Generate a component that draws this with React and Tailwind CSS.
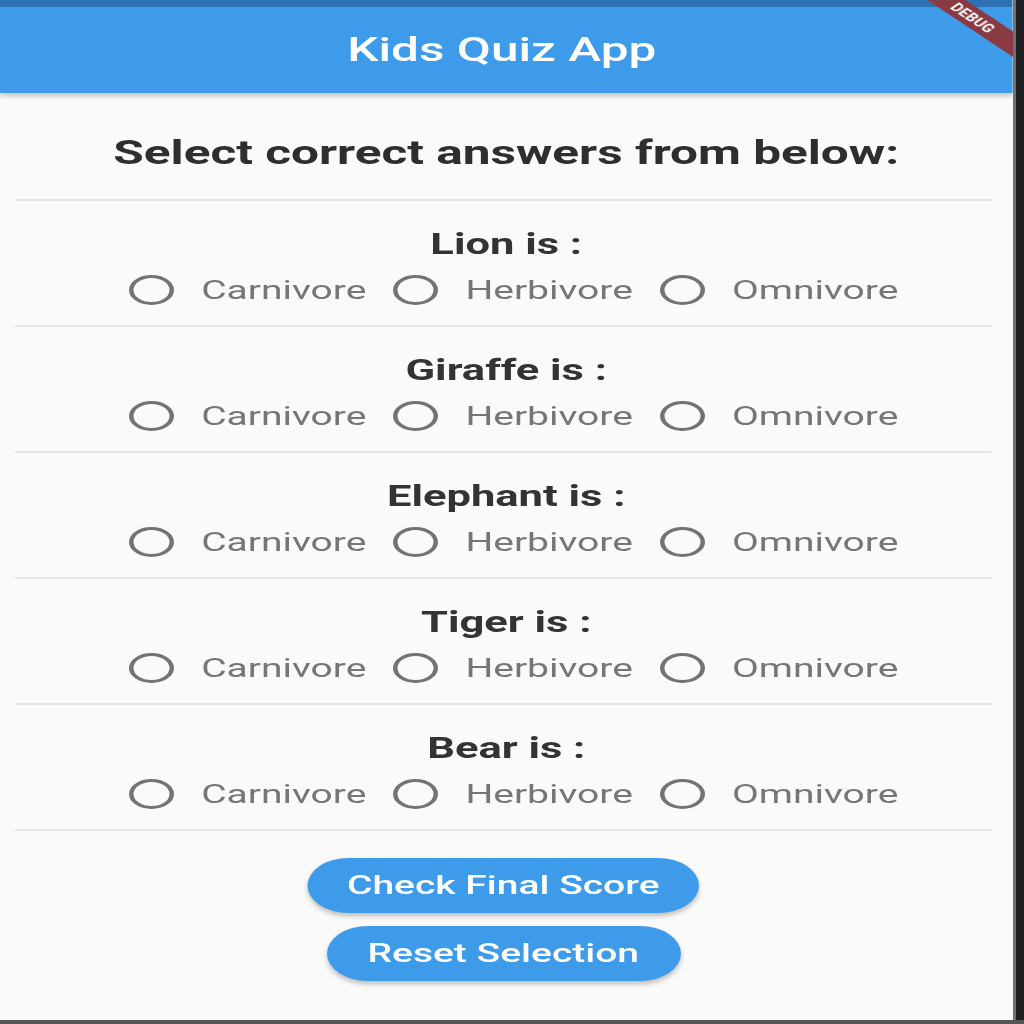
import React from "react";

const animals = ["Lion", "Giraffe", "Elephant", "Tiger", "Bear"];
const options = ["Carnivore", "Herbivore", "Omnivore"];

function Radio() {
  return (
    <div className="w-[30px] h-[30px] rounded-full border-[3px] border-[#737373] shrink-0" />
  );
}

function Divider() {
  return <div className="h-[2px] bg-[#e6e6e6] ml-[10px] mr-[14px]" />;
}

function Question({ name }) {
  return (
    <div className="h-[124px] flex flex-col items-center pt-[28px]">
      <div className="text-[29px] leading-[30px] font-bold text-[#333333]">{name} is :</div>
      <div className="mt-[15px] h-[32px] flex items-center gap-[18px] pl-[10px]">
        {options.map((o) => (
          <React.Fragment key={o}>
            <Radio />
            <span className="text-[26px] leading-[30px] text-[#767676]">{o}</span>
          </React.Fragment>
        ))}
      </div>
    </div>
  );
}

export default function App() {
  return (
    <div className="w-[1024px] h-[1024px] flex flex-col bg-[#2b2b2b] font-['Roboto',sans-serif]">
      <div className="flex h-[1020px]">
        <div className="w-[1013px] h-full overflow-hidden bg-[#fafafa]">
          <div className="w-[675px] h-full origin-top-left scale-x-150 flex flex-col relative">
            <div className="h-[7px] bg-[#2f72b4] shrink-0" />
            <div className="h-[86px] bg-[#3d9be9] shrink-0 flex items-center justify-center pr-[6px] shadow-[0_3px_4px_rgba(0,0,0,0.22)] relative z-10">
              <span className="text-white text-[33px] font-medium">Kids Quiz App</span>
            </div>
            <div className="h-[106px] pt-[14px] flex items-center justify-center shrink-0">
              <span className="text-[33px] font-bold text-[#2e2e2e]">Select correct answers from below:</span>
            </div>
            <Divider />
            {animals.map((a) => (
              <React.Fragment key={a}>
                <Question name={a} />
                <Divider />
              </React.Fragment>
            ))}
            <div className="flex flex-col items-center mt-[27px] gap-[13px] pr-[4px]">
              <button className="w-[261px] h-[55px] rounded-full bg-[#3d9be9] text-white text-[26px] font-medium shadow-[0_3px_4px_rgba(0,0,0,0.25)]">
                Check Final Score
              </button>
              <button className="w-[236px] h-[55px] rounded-full bg-[#3d9be9] text-white text-[26px] font-medium shadow-[0_3px_4px_rgba(0,0,0,0.25)]">
                Reset Selection
              </button>
            </div>
            <div className="absolute left-[571px] top-[1px] w-[140px] h-[18px] bg-[#8a3a42] rotate-45 z-20 flex items-center justify-center">
              <span className="ml-[22px] text-white text-[11px] font-bold tracking-wide leading-none">DEBUG</span>
            </div>
          </div>
        </div>
        <div className="w-[11px] h-full bg-[#1f1f1f] border-l-[3px] border-[#707070]" />
      </div>
      <div className="h-[4px] bg-[#555555]" />
    </div>
  );
}
